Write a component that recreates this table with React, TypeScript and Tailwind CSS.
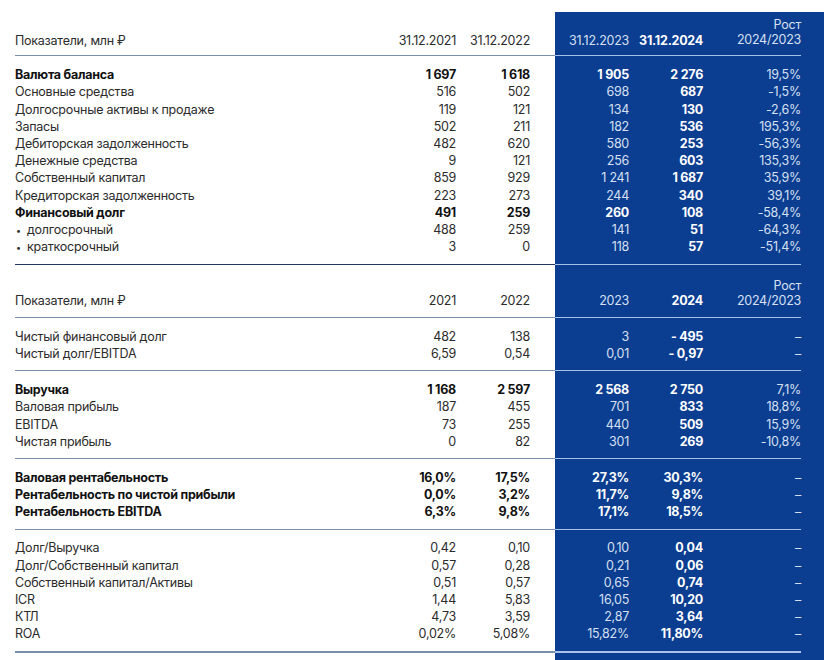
type Row = {
  label: string;
  v: [string, string, string, string, string];
  bold?: boolean;
  bullet?: boolean;
};

type Side = "left" | "right";

const balance: Row[] = [
  { label: "Валюта баланса", v: ["1 697", "1 618", "1 905", "2 276", "19,5%"], bold: true },
  { label: "Основные средства", v: ["516", "502", "698", "687", "-1,5%"] },
  { label: "Долгосрочные активы к продаже", v: ["119", "121", "134", "130", "-2,6%"] },
  { label: "Запасы", v: ["502", "211", "182", "536", "195,3%"] },
  { label: "Дебиторская задолженность", v: ["482", "620", "580", "253", "-56,3%"] },
  { label: "Денежные средства", v: ["9", "121", "256", "603", "135,3%"] },
  { label: "Собственный капитал", v: ["859", "929", "1 241", "1 687", "35,9%"] },
  { label: "Кредиторская задолженность", v: ["223", "273", "244", "340", "39,1%"] },
  { label: "Финансовый долг", v: ["491", "259", "260", "108", "-58,4%"], bold: true },
  { label: "долгосрочный", v: ["488", "259", "141", "51", "-64,3%"], bullet: true },
  { label: "краткосрочный", v: ["3", "0", "118", "57", "-51,4%"], bullet: true },
];

const debt: Row[] = [
  { label: "Чистый финансовый долг", v: ["482", "138", "3", "- 495", "–"] },
  { label: "Чистый долг/EBITDA", v: ["6,59", "0,54", "0,01", "- 0,97", "–"] },
];

const results: Row[] = [
  { label: "Выручка", v: ["1 168", "2 597", "2 568", "2 750", "7,1%"], bold: true },
  { label: "Валовая прибыль", v: ["187", "455", "701", "833", "18,8%"] },
  { label: "EBITDA", v: ["73", "255", "440", "509", "15,9%"] },
  { label: "Чистая прибыль", v: ["0", "82", "301", "269", "-10,8%"] },
];

const margins: Row[] = [
  { label: "Валовая рентабельность", v: ["16,0%", "17,5%", "27,3%", "30,3%", "–"], bold: true },
  { label: "Рентабельность по чистой прибыли", v: ["0,0%", "3,2%", "11,7%", "9,8%", "–"], bold: true },
  { label: "Рентабельность EBITDA", v: ["6,3%", "9,8%", "17,1%", "18,5%", "–"], bold: true },
];

const ratios: Row[] = [
  { label: "Долг/Выручка", v: ["0,42", "0,10", "0,10", "0,04", "–"] },
  { label: "Долг/Собственный капитал", v: ["0,57", "0,28", "0,21", "0,06", "–"] },
  { label: "Собственный капитал/Активы", v: ["0,51", "0,57", "0,65", "0,74", "–"] },
  { label: "ICR", v: ["1,44", "5,83", "16,05", "10,20", "–"] },
  { label: "КТЛ", v: ["4,73", "3,59", "2,87", "3,64", "–"] },
  { label: "ROA", v: ["0,02%", "5,08%", "15,82%", "11,80%", "–"] },
];

function Line({ side, dark, thick }: { side: Side; dark?: boolean; thick?: boolean }) {
  const h = thick ? "h-[2px]" : "h-px";
  if (side === "left") return <div className={`${h} ${dark ? "bg-[#1f3a5f]" : "bg-[#7890ab]"}`} />;
  return <div className={`${h} mr-[23px] bg-[#a9c2ea]`} />;
}

function DataRow({ row, side }: { row: Row; side: Side }) {
  if (side === "left") {
    const w = row.bold ? "font-bold text-[#111]" : "text-[#2b2b2b]";
    return (
      <div className={`flex h-[17.2px] items-center pr-[25px] ${w}`}>
        <div className="flex-1">
          {row.bullet && <span className="inline-block w-[12px] pl-[1px] text-[9px] align-middle">•</span>}
          {row.label}
        </div>
        <div className="w-[74px] text-right">{row.v[0]}</div>
        <div className="w-[74px] text-right">{row.v[1]}</div>
      </div>
    );
  }
  return (
    <div className="flex h-[17.2px] items-center pr-[23px]">
      <div className={`w-[74px] text-right ${row.bold ? "font-bold text-white" : "text-[#d6e0f2]"}`}>{row.v[2]}</div>
      <div className="w-[74px] text-right font-bold text-white">{row.v[3]}</div>
      <div className="w-[98px] text-right text-[#d6e0f2]">{row.v[4]}</div>
    </div>
  );
}

function Group({ rows, side, first }: { rows: Row[]; side: Side; first?: boolean }) {
  return (
    <div className={first ? "pt-[11px] pb-[8px]" : "pt-[10.5px] pb-[7.5px]"}>
      {rows.map((r) => (
        <DataRow key={r.label} row={r} side={side} />
      ))}
    </div>
  );
}

function Header({ side, cols, second }: { side: Side; cols: string[]; second?: boolean }) {
  const box = second ? "h-[52px]" : "h-[43px]";
  const pb = second ? "pb-[8px]" : "pb-[6.5px]";
  if (side === "left") {
    return (
      <div className={`flex items-end pr-[25px] leading-[17px] text-[#2b2b2b] ${box} ${pb}`}>
        <div className="flex-1">Показатели, млн ₽</div>
        <div className="w-[74px] text-right">{cols[0]}</div>
        <div className="w-[74px] text-right">{cols[1]}</div>
      </div>
    );
  }
  return (
    <div className={`flex items-end pr-[23px] ${box}`}>
      <div className={`w-[74px] text-right leading-[17px] text-[#d6e0f2] ${pb}`}>{cols[2]}</div>
      <div className={`w-[74px] text-right font-bold leading-[17px] text-white ${pb}`}>{cols[3]}</div>
      <div className={`w-[98px] text-right leading-[15px] text-[#d6e0f2] ${second ? "pb-[9.5px]" : "pb-[8.5px]"}`}>
        <div>Рост</div>
        <div>2024/2023</div>
      </div>
    </div>
  );
}

function Table({ side }: { side: Side }) {
  return (
    <>
      <Header side={side} cols={["31.12.2021", "31.12.2022", "31.12.2023", "31.12.2024"]} />
      <Line side={side} />
      <Group rows={balance} side={side} first />
      <Line side={side} dark />

      <Header side={side} cols={["2021", "2022", "2023", "2024"]} second />
      <Line side={side} />
      <Group rows={debt} side={side} />
      <Line side={side} />
      <Group rows={results} side={side} />
      <Line side={side} />
      <Group rows={margins} side={side} />
      <Line side={side} />
      <Group rows={ratios} side={side} />
      <Line side={side} thick />
    </>
  );
}

export default function App() {
  return (
    <div
      className="flex h-[660px] w-[824px] overflow-hidden bg-white pl-[15px] pt-[12px] text-[12.5px] tracking-[-0.25px]"
      style={{ fontFamily: "Inter, 'Noto Sans', sans-serif" }}
    >
      <div className="w-[540px]">
        <Table side="left" />
      </div>
      <div className="w-[269px] bg-[#0b3d91]">
        <Table side="right" />
      </div>
    </div>
  );
}
